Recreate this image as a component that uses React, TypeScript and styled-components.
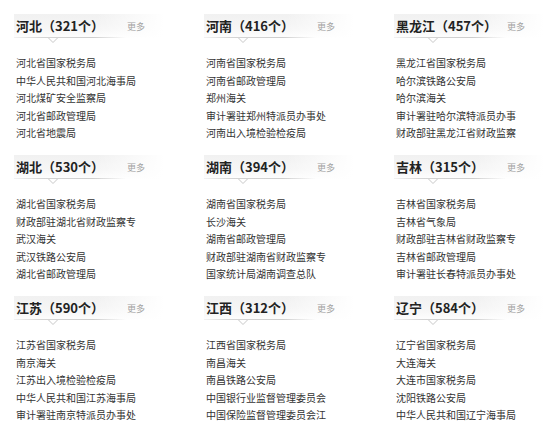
import React from "react";
import styled, { createGlobalStyle } from "styled-components";

const GlobalStyle = createGlobalStyle`
  html, body { margin: 0; padding: 0; background: #fff; }
  body { font-family: "Noto Sans CJK SC", "Noto Sans", sans-serif; }
`;

type Region = { name: string; count: number; items: string[] };

const regions: Region[] = [
  { name: "河北", count: 321, items: ["河北省国家税务局", "中华人民共和国河北海事局", "河北煤矿安全监察局", "河北省邮政管理局", "河北省地震局"] },
  { name: "河南", count: 416, items: ["河南省国家税务局", "河南省邮政管理局", "郑州海关", "审计署驻郑州特派员办事处", "河南出入境检验检疫局"] },
  { name: "黑龙江", count: 457, items: ["黑龙江省国家税务局", "哈尔滨铁路公安局", "哈尔滨海关", "审计署驻哈尔滨特派员办事", "财政部驻黑龙江省财政监察"] },
  { name: "湖北", count: 530, items: ["湖北省国家税务局", "财政部驻湖北省财政监察专", "武汉海关", "武汉铁路公安局", "湖北省邮政管理局"] },
  { name: "湖南", count: 394, items: ["湖南省国家税务局", "长沙海关", "湖南省邮政管理局", "财政部驻湖南省财政监察专", "国家统计局湖南调查总队"] },
  { name: "吉林", count: 315, items: ["吉林省国家税务局", "吉林省气象局", "财政部驻吉林省财政监察专", "吉林省邮政管理局", "审计署驻长春特派员办事处"] },
  { name: "江苏", count: 590, items: ["江苏省国家税务局", "南京海关", "江苏出入境检验检疫局", "中华人民共和国江苏海事局", "审计署驻南京特派员办事处"] },
  { name: "江西", count: 312, items: ["江西省国家税务局", "南昌海关", "南昌铁路公安局", "中国银行业监督管理委员会", "中国保险监督管理委员会江"] },
  { name: "辽宁", count: 584, items: ["辽宁省国家税务局", "大连海关", "大连市国家税务局", "沈阳铁路公安局", "中华人民共和国辽宁海事局"] },
];

const Page = styled.div`
  padding: 14px 0 0 14px;
  display: grid;
  grid-template-columns: 190px 190px minmax(0, 1fr);
  grid-auto-rows: 141px;
  overflow: hidden;
`;

const Block = styled.section`
  display: flex;
  flex-direction: column;
  min-width: 0;
`;

const Header = styled.div`
  position: relative;
  width: 148px;
  height: 22px;
  padding: 0 0 2px 2px;
  display: grid;
  grid-template-columns: 111px auto;
  align-items: center;
  background:
    linear-gradient(to right, rgba(255,255,255,0) 0%, rgba(255,255,255,0) 55%, #fff 100%),
    linear-gradient(to bottom, #f1f1f1 0%, #f6f6f6 60%, #fefefe 100%);
  &::after {
    content: "";
    position: absolute;
    left: 0;
    bottom: 0;
    width: 112px;
    height: 1px;
    background: linear-gradient(to right, #f2f2f2 0%, #d4d4d4 25%, #cdcdcd 70%, rgba(220,220,220,0) 100%);
  }
`;

const Title = styled.h3`
  margin: 0;
  padding-top: 1px;
  font-size: 13px;
  font-weight: 700;
  color: #222;
  white-space: nowrap;
  line-height: 16px;
`;

const More = styled.a`
  padding-top: 3px;
  font-size: 9px;
  color: #a3a3a3;
  text-decoration: none;
  line-height: 12px;
  white-space: nowrap;
`;

const Caret = styled.svg`
  position: absolute;
  left: 34px;
  bottom: -5px;
  overflow: visible;
`;

const List = styled.ul`
  list-style: none;
  margin: 16px 0 0 2px;
  padding: 0;
`;

const Item = styled.li`
  font-size: 10px;
  line-height: 17.5px;
  color: #333;
  white-space: nowrap;
`;

export default function App() {
  return (
    <>
      <GlobalStyle />
      <Page>
        {regions.map((r) => (
          <Block key={r.name}>
            <Header>
              <Title>
                {r.name}（{r.count}个）
              </Title>
              <More href="#">更多</More>
              <Caret width="10" height="6" viewBox="0 0 10 6">
                <polygon points="0,0.5 5,5.5 10,0.5" fill="#fff" />
                <polyline points="0,0.5 5,5.5 10,0.5" fill="none" stroke="#c8c8c8" strokeWidth="1" />
              </Caret>
            </Header>
            <List>
              {r.items.map((it) => (
                <Item key={it}>{it}</Item>
              ))}
            </List>
          </Block>
        ))}
      </Page>
    </>
  );
}
